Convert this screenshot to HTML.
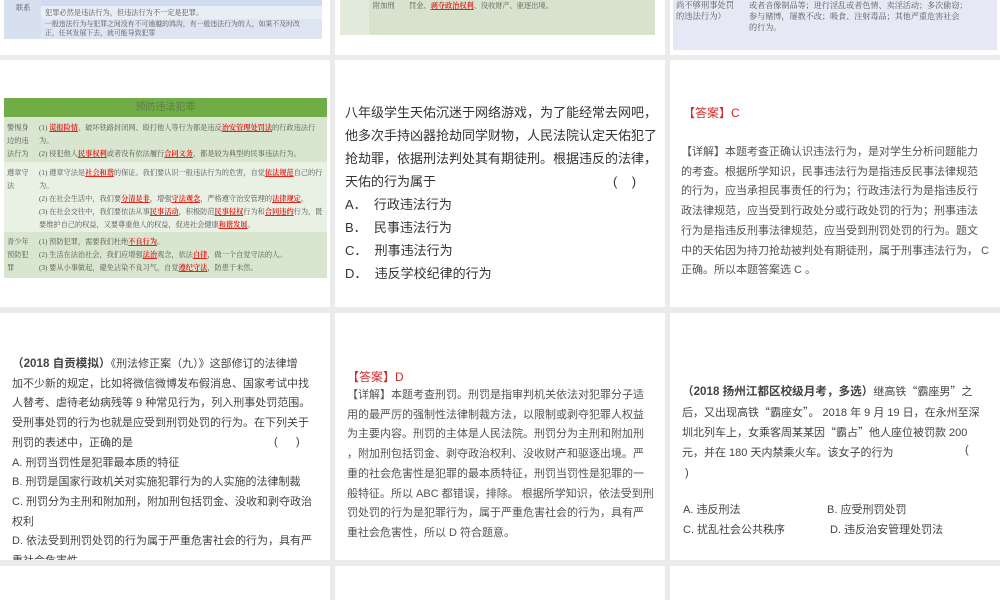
<!DOCTYPE html>
<html><head><meta charset="utf-8"><style>
*{margin:0;padding:0;box-sizing:border-box}
body{width:1000px;height:600px;background:#ebebeb;position:relative;overflow:hidden;font-family:"Liberation Sans","Noto Sans CJK SC",sans-serif;color:#404040}
.c{position:absolute;background:#fff;overflow:hidden}
.a{position:absolute}
.n{white-space:nowrap}
.s{font-family:"Liberation Serif","Noto Serif CJK SC",serif}
.r{color:#e0261f;text-decoration:underline;font-weight:bold}
.t7{font-size:7.2px;line-height:13px;color:#555}
.q{font-family:"Noto Sans CJK SC",sans-serif}
</style></head><body>
<!-- row 1 -->
<div class="c" style="left:0;top:0;width:330px;height:55px">
 <div class="a" style="left:4px;top:0;width:318px;height:39px;background:#d6e0ef"></div>
 <div class="a" style="left:41px;top:0;width:281px;height:6px;background:#cfdaee"></div>
 <div class="a" style="left:41px;top:6px;width:281px;height:13px;background:#e8edf6"></div>
 <div class="a" style="left:41px;top:19px;width:281px;height:20px;background:#dde5f2"></div>
 <div class="a s t7" style="left:16px;top:2px">联系</div>
 <div class="a s t7" style="left:45px;top:7px">犯罪必然是违法行为，但违法行为不一定是犯罪。</div>
 <div class="a s n" style="left:45px;top:20px;font-size:6.9px;line-height:9px;color:#555">一般违法行为与犯罪之间没有不可逾越的鸿沟，有一般违法行为的人，如果不及时改<br>正，任其发展下去，就可能导致犯罪</div>
</div>
<div class="c" style="left:335px;top:0;width:330px;height:55px">
 <div class="a" style="left:5px;top:0;width:315px;height:35px;background:#d7e3cd"></div>
 <div class="a" style="left:5px;top:0;width:29px;height:35px;background:#e3ebdc"></div>
 <div class="a s t7" style="left:38px;top:0">附加刑</div>
 <div class="a s t7" style="left:74px;top:0">罚金、<span class="r">剥夺政治权利</span>、没收财产、驱逐出境。</div>
</div>
<div class="c" style="left:670px;top:0;width:330px;height:55px">
 <div class="a" style="left:3px;top:0;width:324px;height:50px;background:#e6e9f5"></div>
 <div class="a s n" style="left:6px;top:0;font-size:8.3px;line-height:11px;color:#555">尚不够刑事处罚<br>的违法行为）</div>
 <div class="a s n" style="left:79px;top:0;font-size:8.1px;line-height:11px;color:#555">或者音像制品等；进行淫乱或者色情、卖淫活动；多次偷窃；<br>参与赌博，屡教不改；吸食、注射毒品；其他严重危害社会<br>的行为。</div>
</div>
<!-- row 2 -->
<div class="c" style="left:0;top:60px;width:330px;height:247px">
 <div class="a" style="left:4px;top:38px;width:323px;height:19px;background:#70ad47;color:#5e7f46;font-size:10px;line-height:19px;text-align:center">预防违法犯罪</div>
 <div class="a" style="left:4px;top:57px;width:323px;height:45px;background:#d9e6cf"></div>
 <div class="a" style="left:4px;top:102px;width:323px;height:70px;background:#e9f0e4"></div>
 <div class="a" style="left:4px;top:172px;width:323px;height:46px;background:#d9e6cf"></div>
 <div class="a s t7" style="left:7px;top:62px;width:24px;line-height:13px">警惕身边的违法行为</div>
 <div class="a s t7" style="left:7px;top:107px;width:24px;line-height:13px">遵章守法</div>
 <div class="a s t7" style="left:7px;top:176px;width:24px;line-height:13px">青少年预防犯罪</div>
 <div class="a s t7" style="left:39px;top:62px;width:286px;line-height:13px">(1) <span class="r">谎报险情</span>、破坏铁路封闭网、殴打他人等行为都是违反<span class="r">治安管理处罚法</span>的行政违法行为。<br>(2) 侵犯他人<span class="r">民事权利</span>或者没有依法履行<span class="r">合同义务</span>，都是较为典型的民事违法行为。</div>
 <div class="a s t7" style="left:39px;top:107px;width:286px;line-height:13px">(1) 遵章守法是<span class="r">社会和谐</span>的保证。我们要认识一般违法行为的危害，自觉<span class="r">依法规范</span>自己的行为。<br>(2) 在社会生活中，我们要<span class="r">分清是非</span>，增强<span class="r">守法观念</span>，严格遵守治安管理的<span class="r">法律规定</span>。<br>(3) 在社会交往中，我们要依法从事<span class="r">民事活动</span>，积极防范<span class="r">民事侵权</span>行为和<span class="r">合同违约</span>行为，既要维护自己的权益，又要尊重他人的权益，促进社会健康<span class="r">和谐发展</span>。</div>
 <div class="a s t7" style="left:39px;top:176px;width:286px;line-height:13px">(1) 预防犯罪，需要我们杜绝<span class="r">不良行为</span>。<br>(2) 生活在法治社会，我们应增强<span class="r">法治</span>观念，依法<span class="r">自律</span>，做一个自觉守法的人。<br>(3) 要从小事做起，避免沾染不良习气，自觉<span class="r">遵纪守法</span>，防患于未然。</div>
</div>
<div class="c" style="left:335px;top:60px;width:330px;height:247px">
 <div class="a n" style="left:10px;top:41px;font-size:13px;line-height:23px;color:#333">八年级学生天佑沉迷于网络游戏，为了能经常去网吧，<br>他多次手持凶器抢劫同学财物，人民法院认定天佑犯了<br>抢劫罪，依据刑法判处其有期徒刑。根据违反的法律，<br>天佑的行为属于<span style="position:absolute;left:268px;top:69px">(&nbsp;&nbsp;&nbsp;&nbsp;)</span><br>A．&nbsp;&nbsp;行政违法行为<br>B．&nbsp;&nbsp;民事违法行为<br>C．&nbsp;&nbsp;刑事违法行为<br>D．&nbsp;&nbsp;违反学校纪律的行为</div>
</div>
<div class="c" style="left:670px;top:60px;width:330px;height:247px">
 <div class="a" style="left:13px;top:44px;font-size:12px;color:#d42b2b">【答案】C</div>
 <div class="a n" style="left:11px;top:83px;font-size:11px;line-height:19.7px;color:#555">【详解】本题考查正确认识违法行为，是对学生分析问题能力<br>的考查。根据所学知识，民事违法行为是指违反民事法律规范<br>的行为，应当承担民事责任的行为；行政违法行为是指违反行<br>政法律规范，应当受到行政处分或行政处罚的行为；刑事违法<br>行为是指违反刑事法律规范，应当受到刑罚处罚的行为。题文<br>中的天佑因为持刀抢劫被判处有期徒刑，属于刑事违法行为， C<br>正确。所以本题答案选 C 。</div>
</div>
<!-- row 3 -->
<div class="c" style="left:0;top:313px;width:330px;height:247px">
 <div class="a n" style="left:12px;top:41px;font-size:11px;line-height:19.7px;color:#444"><b style="font-size:11.6px">（2018 自贡模拟）</b>《刑法修正案（九）》这部修订的法律增<br>加不少新的规定，比如将微信微博发布假消息、国家考试中找<br>人替考、虐待老幼病残等 9 种常见行为，列入刑事处罚范围。<br>受刑事处罚的行为也就是应受到刑罚处罚的行为。在下列关于<br>刑罚的表述中，正确的是<span style="position:absolute;left:262px;top:79px">(&nbsp;&nbsp;&nbsp;&nbsp;&nbsp;&nbsp;)</span><br>A. 刑罚当罚性是犯罪最本质的特征<br>B. 刑罚是国家行政机关对实施犯罪行为的人实施的法律制裁<br>C. 刑罚分为主刑和附加刑，附加刑包括罚金、没收和剥夺政治<br>权利<br>D. 依法受到刑罚处罚的行为属于严重危害社会的行为，具有严<br>重社会危害性</div>
</div>
<div class="c" style="left:335px;top:313px;width:330px;height:247px">
 <div class="a" style="left:12px;top:55px;font-size:12px;color:#d42b2b">【答案】D</div>
 <div class="a n" style="left:12px;top:73px;font-size:11px;line-height:19.7px;color:#555">【详解】本题考查刑罚。刑罚是指审判机关依法对犯罪分子适<br>用的最严厉的强制性法律制裁方法，以限制或剥夺犯罪人权益<br>为主要内容。刑罚的主体是人民法院。刑罚分为主刑和附加刑<br>，附加刑包括罚金、剥夺政治权利、没收财产和驱逐出境。严<br>重的社会危害性是犯罪的最本质特征，刑罚当罚性是犯罪的一<br>般特征。所以 ABC 都错误，排除。 根据所学知识，依法受到刑<br>罚处罚的行为是犯罪行为，属于严重危害社会的行为，具有严<br>重社会危害性，所以 D 符合题意。</div>
</div>
<div class="c" style="left:670px;top:313px;width:330px;height:247px">
 <div class="a n" style="left:12px;top:69px;font-size:11px;line-height:19.7px;color:#444"><b style="font-size:11.6px">（2018 扬州江都区校级月考，多选）</b>继高铁<span class="q">“</span>霸座男<span class="q">”</span>之<br>后，又出现高铁<span class="q">“</span>霸座女<span class="q">”</span>。 2018 年 9 月 19 日，在永州至深<br>圳北列车上，女乘客周某某因<span class="q">“</span>霸占<span class="q">”</span>他人座位被罚款 200<br>元，并在 180 天内禁乘火车。该女子的行为<span style="position:absolute;left:283px;top:59px">(</span><br>&nbsp;)</div>
 <div class="a n" style="left:13px;top:188px;font-size:11px;line-height:19.7px;color:#444">A. 违反刑法<br>C. 扰乱社会公共秩序</div>
 <div class="a n" style="left:157px;top:188px;font-size:11px;line-height:19.7px;color:#444">B. 应受刑罚处罚<br>&nbsp;D. 违反治安管理处罚法</div>
</div>
<!-- row 4 -->
<div class="c" style="left:0;top:566px;width:330px;height:34px"></div>
<div class="c" style="left:335px;top:566px;width:330px;height:34px"></div>
<div class="c" style="left:670px;top:566px;width:330px;height:34px"></div>
</body></html>
